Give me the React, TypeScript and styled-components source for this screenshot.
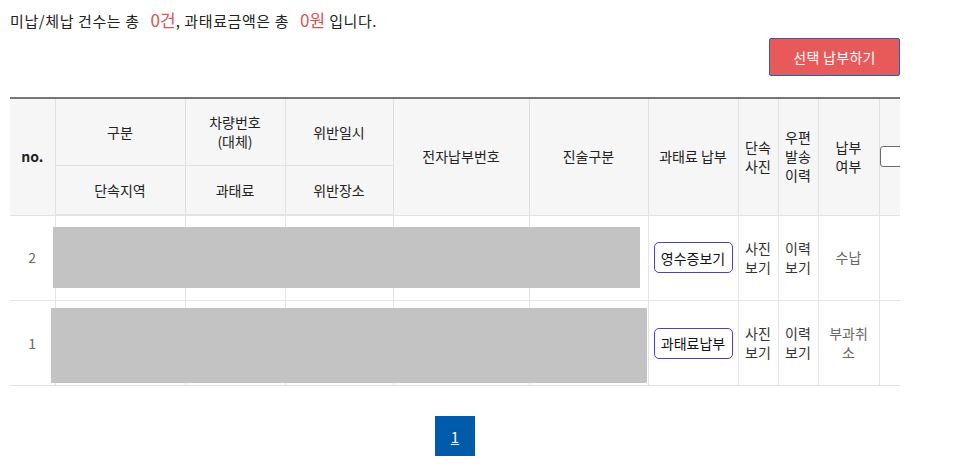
import React from "react";
import styled, { createGlobalStyle } from "styled-components";

const Global = createGlobalStyle`
  html, body { margin: 0; padding: 0; background: #fff; }
  body { font-family: "Noto Sans CJK KR", "Noto Sans", sans-serif; color: #222; }
`;

const Page = styled.div`
  width: 890px;
  padding: 10px 0 0 10px;
`;

const Summary = styled.p`
  margin: 0;
  font-size: 15px;
  letter-spacing: 0.6px;
  line-height: 20px;
  height: 20px;
  color: #222;
  white-space: nowrap;
`;

const Count = styled.span`
  color: #d9534f;
  font-size: 17px;
  letter-spacing: 0;
  margin-left: 7px;
`;

const Toolbar = styled.div`
  display: flex;
  justify-content: flex-end;
  margin-top: 8px;
`;

const PayButton = styled.button`
  width: 131px;
  height: 38px;
  background: #e85a5a;
  border: 1px solid #2d5fa6;
  border-radius: 2px;
  color: #fff;
  font-family: inherit;
  font-size: 14px;
  letter-spacing: 0.3px;
  padding: 0;
  cursor: pointer;
`;

const TableWrap = styled.div`
  position: relative;
  margin-top: 21px;
  width: 890px;
  overflow: hidden;
  border-top: 2px solid #777;
  border-bottom: 1px solid #e3e3e3;
`;

const Table = styled.table`
  border-collapse: collapse;
  border-style: hidden;
  table-layout: fixed;
  width: 929px;
  font-size: 14px;
`;

const Th = styled.th<{ $h?: number; $bold?: boolean }>`
  background: #f6f6f6;
  border: 1px solid #e2e2e2;
  font-weight: ${(p) => (p.$bold ? 700 : 400)};
  color: #222;
  line-height: 19px;
  height: ${(p) => (p.$h ? `${p.$h}px` : "auto")};
  padding: 0 2px;
  text-align: center;
  vertical-align: middle;
`;

const HeadRowLast = styled.tr`
  th { border-bottom: 2px solid #e2e2e2; }
`;

const Td = styled.td<{ $muted?: boolean }>`
  border: 1px solid #e4e4e4;
  height: 84px;
  padding: 0 2px;
  text-align: center;
  vertical-align: middle;
  line-height: 19px;
  color: ${(p) => (p.$muted ? "#666" : "#333")};
`;

const CheckCell = styled.th`
  background: #f6f6f6;
  border: 1px solid #e2e2e2;
  padding: 0;
  text-align: left;
  vertical-align: middle;
`;

const Check = styled.span`
  display: block;
  width: 22px;
  height: 19px;
  border: 1px solid #6b6b6b;
  border-radius: 3px;
  background: #fff;
`;

const OutlineButton = styled.button`
  height: 31px;
  width: 79px;
  padding: 0;
  border: 1px solid #4a3fd0;
  border-radius: 5px;
  background: #fff;
  color: #111;
  font-family: inherit;
  font-size: 14px;
  cursor: pointer;
`;

const Mask = styled.div<{ $left: number; $top: number; $w: number; $h: number }>`
  position: absolute;
  left: ${(p) => p.$left}px;
  top: ${(p) => p.$top}px;
  width: ${(p) => p.$w}px;
  height: ${(p) => p.$h}px;
  background: #c3c3c3;
`;

const Pager = styled.nav`
  display: flex;
  justify-content: center;
  margin-top: 30px;
`;

const PageLink = styled.a`
  display: flex;
  align-items: center;
  justify-content: center;
  width: 40px;
  height: 40px;
  background: #005bab;
  color: #fff;
  font-size: 15px;
  text-decoration: underline;
`;

const cols = [45, 130, 100, 108, 136, 119, 90, 40, 40, 61, 60];

type Row = { no: number; action: string; status: React.ReactNode };
const rows: Row[] = [
  { no: 2, action: "영수증보기", status: "수납" },
  { no: 1, action: "과태료납부", status: <>부과취<br />소</> },
];

export default function App() {
  return (
    <>
      <Global />
      <Page>
        <Summary>
          미납/체납 건수는 총 <Count>0건</Count>, 과태료금액은 총 <Count>0원</Count> 입니다.
        </Summary>
        <Toolbar>
          <PayButton>선택 납부하기</PayButton>
        </Toolbar>
        <TableWrap>
          <Table>
            <colgroup>
              {cols.map((w, i) => (
                <col key={i} style={{ width: w }} />
              ))}
            </colgroup>
            <thead>
              <tr>
                <Th rowSpan={2} $bold>no.</Th>
                <Th $h={66}>구분</Th>
                <Th>차량번호<br />(대체)</Th>
                <Th>위반일시</Th>
                <Th rowSpan={2}>전자납부번호</Th>
                <Th rowSpan={2}>진술구분</Th>
                <Th rowSpan={2}>과태료 납부</Th>
                <Th rowSpan={2}>단속<br />사진</Th>
                <Th rowSpan={2}>우편<br />발송<br />이력</Th>
                <Th rowSpan={2}>납부<br />여부</Th>
                <CheckCell rowSpan={2}>
                  <Check />
                </CheckCell>
              </tr>
              <HeadRowLast>
                <Th $h={48}>단속지역</Th>
                <Th>과태료</Th>
                <Th>위반장소</Th>
              </HeadRowLast>
            </thead>
            <tbody>
              {rows.map((r) => (
                <tr key={r.no}>
                  <Td $muted>{r.no}</Td>
                  <Td />
                  <Td />
                  <Td />
                  <Td />
                  <Td />
                  <Td>
                    <OutlineButton>{r.action}</OutlineButton>
                  </Td>
                  <Td>사진<br />보기</Td>
                  <Td>이력<br />보기</Td>
                  <Td $muted>{r.status}</Td>
                  <Td />
                </tr>
              ))}
            </tbody>
          </Table>
          <Mask $left={43} $top={128} $w={587} $h={61} />
          <Mask $left={41} $top={209} $w={596} $h={75} />
        </TableWrap>
        <Pager>
          <PageLink href="#">1</PageLink>
        </Pager>
      </Page>
    </>
  );
}
